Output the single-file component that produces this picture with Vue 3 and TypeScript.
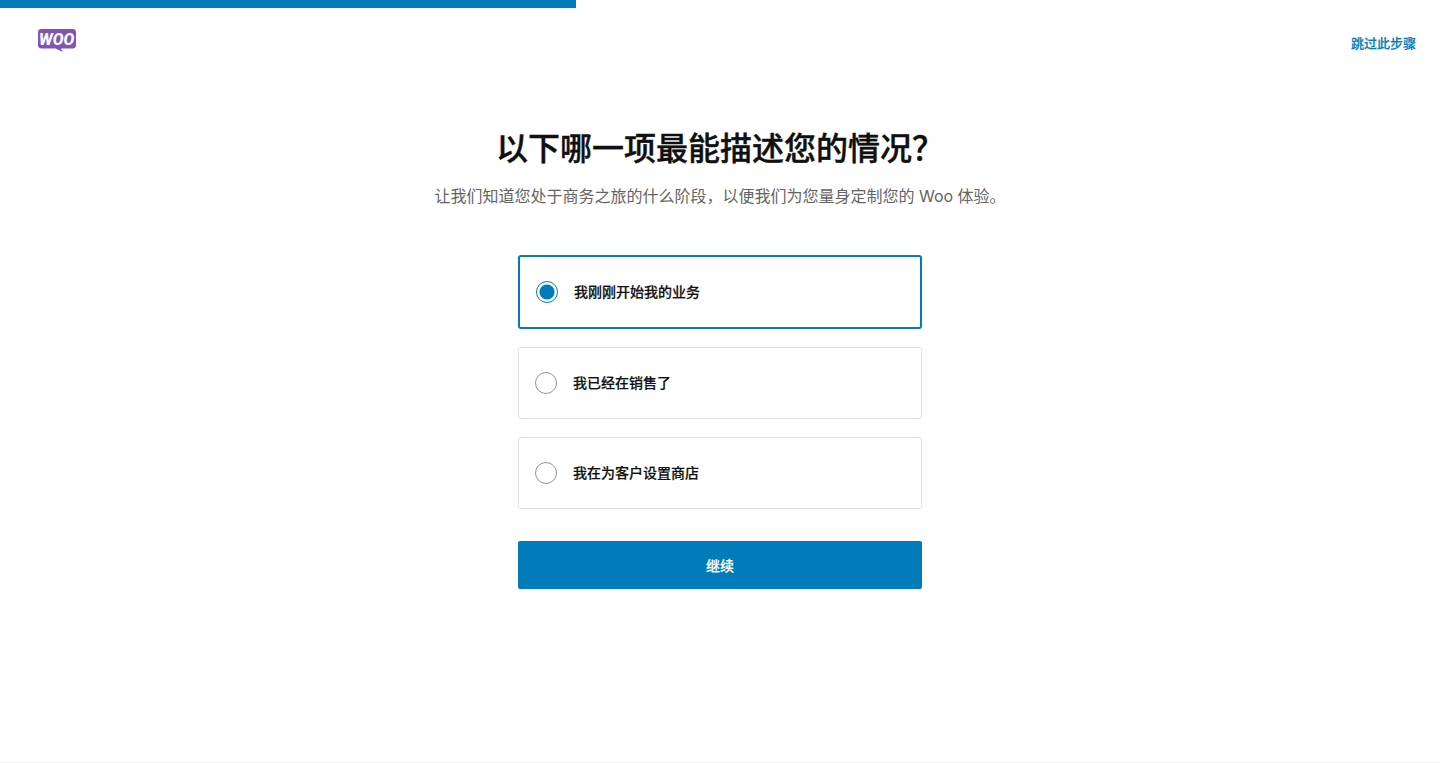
<script setup lang="ts">
import { ref } from 'vue'

interface Choice {
  value: string
  label: string
}

const choices: Choice[] = [
  { value: 'starting', label: '我刚刚开始我的业务' },
  { value: 'selling', label: '我已经在销售了' },
  { value: 'client', label: '我在为客户设置商店' },
]

const selected = ref<string>('starting')
const progress = ref<number>(40)
</script>

<template>
  <div class="wizard">
    <div class="progress" role="progressbar" :aria-valuenow="progress" aria-valuemin="0" aria-valuemax="100">
      <div class="progress-fill" :style="{ width: progress + '%' }"></div>
    </div>

    <header class="header">
      <svg class="logo" viewBox="0 0 38 23" role="img" aria-label="Woo">
        <path
          d="M3.4 0H34.6Q38 0 38 3.4V16.1Q38 19.5 34.6 19.5H22.8L25 23L17.4 19.5H3.4Q0 19.5 0 16.1V3.4Q0 0 3.4 0Z"
          fill="#7f54b3"
        />
        <text class="logo-text" x="18.6" y="15.6" text-anchor="middle">WOO</text>
      </svg>
      <a class="skip" href="#">跳过此步骤</a>
    </header>

    <main class="content">
      <h1 class="title">以下哪一项最能描述您的情况？</h1>
      <p class="subtitle">让我们知道您处于商务之旅的什么阶段，以便我们为您量身定制您的 Woo 体验。</p>

      <form class="form" @submit.prevent>
        <div class="choices">
          <label
            v-for="choice in choices"
            :key="choice.value"
            class="choice"
            :class="{ active: selected === choice.value }"
          >
            <input v-model="selected" class="radio" type="radio" name="situation" :value="choice.value" />
            <span>{{ choice.label }}</span>
          </label>
        </div>
        <button class="continue" type="submit">继续</button>
      </form>
    </main>
  </div>
</template>

<style>
body {
  margin: 0;
  background: #fff;
}
</style>

<style scoped>
.wizard {
  box-sizing: border-box;
  display: flex;
  flex-direction: column;
  min-height: 100vh;
  border-bottom: 1px solid #f0f0f0;
  background: #fff;
  color: #101010;
  font-family: Inter, 'Noto Sans CJK SC', sans-serif;
}

.progress {
  height: 8px;
}

.progress-fill {
  height: 100%;
  background: #007cba;
}

.header {
  display: flex;
  align-items: flex-start;
  justify-content: space-between;
  padding: 21px 24px 15px 38px;
}

.logo {
  width: 38px;
  height: 23px;
}

.logo-text {
  fill: #fff;
  stroke: #fff;
  stroke-width: 0.2;
  font: italic 700 16px Roboto, sans-serif;
}

.skip {
  color: #007cba;
  font-size: 13px;
  font-weight: 500;
  line-height: 28px;
  text-decoration: none;
  -webkit-text-stroke: 0.2px currentColor;
}

.content {
  display: flex;
  flex-direction: column;
  align-items: center;
  padding: 56px 24px 32px;
}

.title {
  margin: 0;
  font-size: 32px;
  font-weight: 500;
  line-height: 42px;
  text-align: center;
  -webkit-text-stroke: 0.4px currentColor;
}

.subtitle {
  margin: 14px 0 0;
  color: #646464;
  font-size: 16px;
  line-height: 24px;
  text-align: center;
}

.form {
  display: flex;
  flex-direction: column;
  gap: 32px;
  width: 100%;
  max-width: 404px;
  margin-top: 47px;
}

.choices {
  display: flex;
  flex-direction: column;
  gap: 18px;
}

.choice {
  display: flex;
  align-items: center;
  gap: 16px;
  padding: 24px 16px;
  border: 1px solid #e0e0e0;
  border-radius: 3px;
  font-size: 14px;
  font-weight: 500;
  line-height: 22px;
  cursor: pointer;
  -webkit-text-stroke: 0.2px currentColor;
}

.choice.active {
  border: 2px solid #007cba;
}

.radio {
  box-sizing: border-box;
  flex: none;
  width: 22px;
  height: 22px;
  margin: 0;
  border: 1px solid #949494;
  border-radius: 50%;
  background: #fff;
  appearance: none;
}

.radio:checked {
  border-color: #007cba;
  background: radial-gradient(circle, #007cba 7px, #fff 8px);
}

.continue {
  height: 48px;
  padding: 0 16px;
  border: 0;
  border-radius: 2px;
  background: #007cba;
  color: #fff;
  font-family: inherit;
  font-size: 14px;
  font-weight: 500;
  cursor: pointer;
  -webkit-text-stroke: 0.2px currentColor;
}
</style>
